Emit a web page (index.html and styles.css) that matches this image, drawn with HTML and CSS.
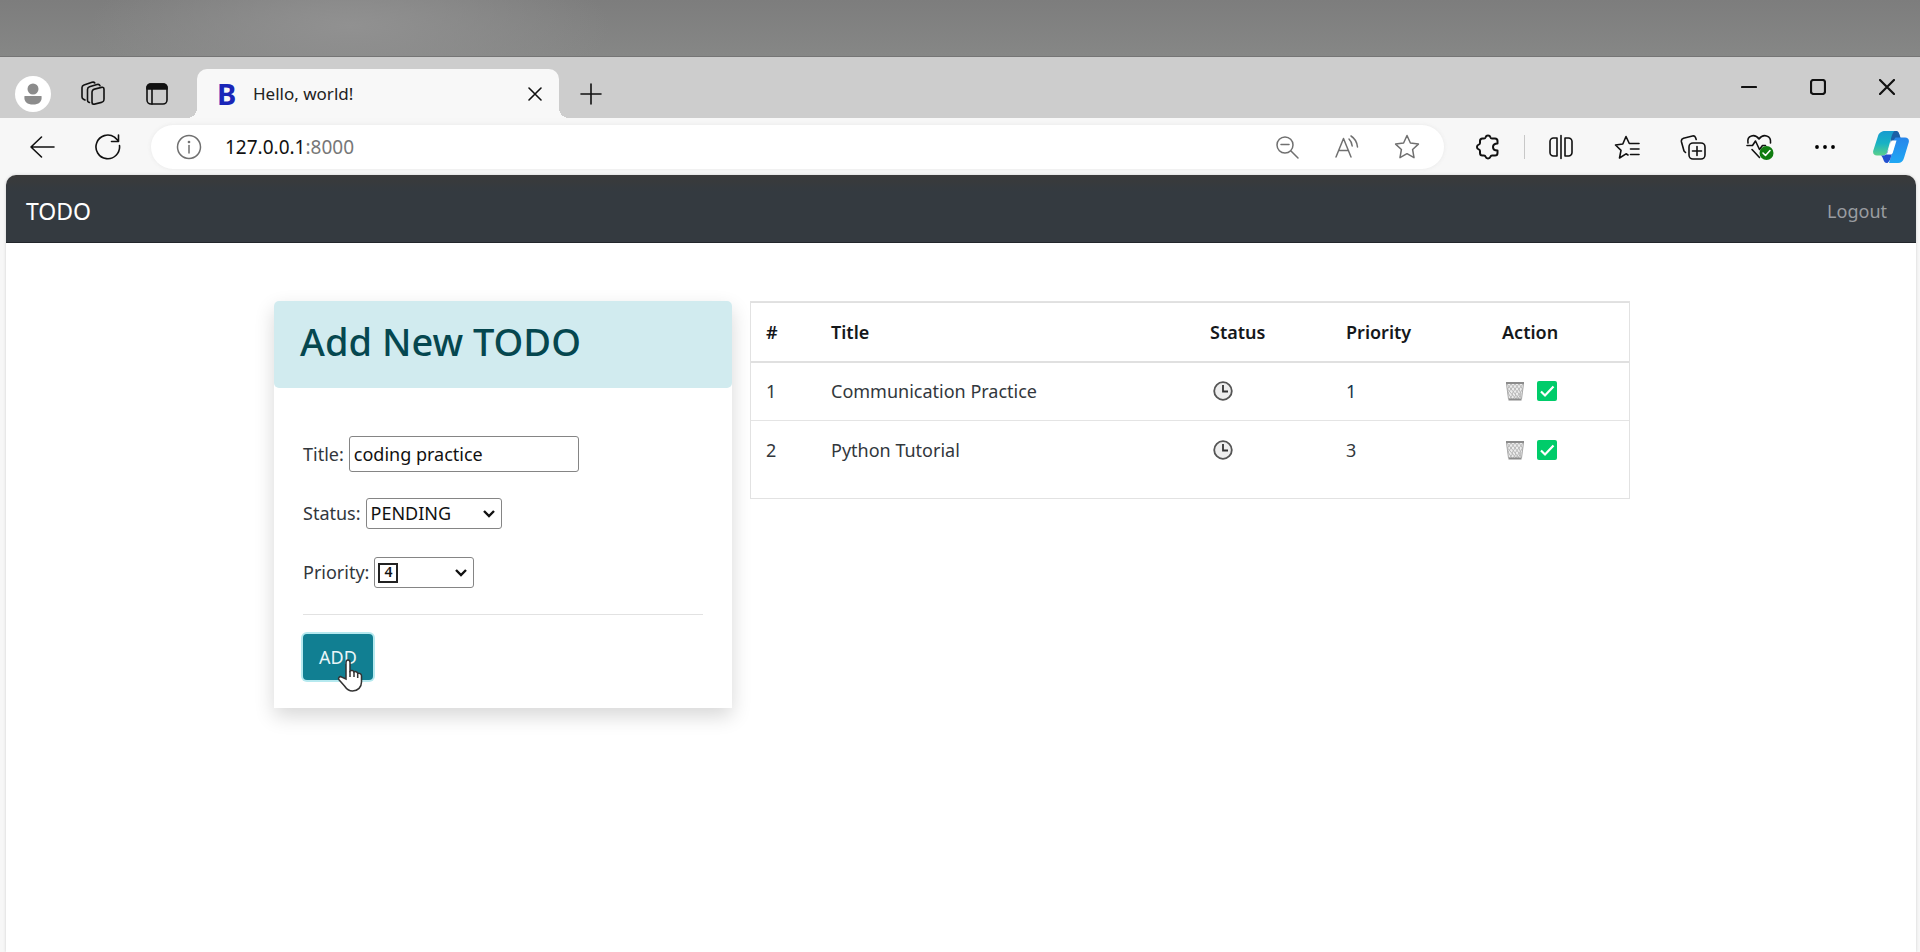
FILE: index.html
```html
<!DOCTYPE html>
<html lang="en">
<head>
<meta charset="utf-8">
<title>Hello, world!</title>
<link rel="stylesheet" href="styles.css">
</head>
<body>
<div class="desktop"></div>
<div class="browser">
  <header class="tabbar">
    <button class="avatar" aria-label="Profile"><svg width="36" height="36" viewBox="0 0 36 36"><circle cx="18" cy="18" r="18" fill="#fff"/><circle cx="18" cy="13" r="5.5" fill="#8c8c8c"/><path d="M9.500 20h17c1 6-3 8.500-8.500 8.500S8.500 26 9.500 20z" fill="#8c8c8c"/></svg></button>
    <button class="icon" aria-label="Workspaces"><svg width="28" height="28" viewBox="0 0 28 28" class="line"><rect x="13" y="9" width="12" height="15" rx="2.500" transform="skewY(-14) translate(0 4)"/><path d="M10.500 22.500l-.800-.300c-1-.400-1.200-1-1.200-2V9.500c0-1.500.6-2.200 2-2.700L18 4.500c1.600-.5 2.500 0 3 1.200M6 20l-1.500-.8c-1-.5-1.500-1-1.500-2.200V7.500C3 6 3.500 5.500 5 5l8-2.700c1.200-.4 2.200-.2 2.800.7"/></svg></button>
    <button class="icon" aria-label="Tab actions"><svg width="28" height="28" viewBox="0 0 28 28" class="line"><rect x="4" y="4" width="20" height="20" rx="4"/><path d="M4 9V7.500A3.500 3.500 0 0 1 7.500 4h13A3.500 3.500 0 0 1 24 7.500V9z" fill="#111"/><path d="M9 9v15"/></svg></button>
    <div class="tab">
      <span class="favicon">B</span><span class="tab-title">Hello, world!</span>
      <button class="icon small" aria-label="Close tab"><svg width="14" height="14" viewBox="0 0 14 14" class="line"><path d="M1 1l12 12M13 1L1 13"/></svg></button>
    </div>
    <button class="icon plus" aria-label="New tab"><svg width="22" height="22" viewBox="0 0 22 22" class="line"><path d="M11 1v20M1 11h20"/></svg></button>
    <div class="window-controls">
      <button class="icon" aria-label="Minimize"><svg width="16" height="16" viewBox="0 0 16 16" class="line bold"><path d="M1 8h14"/></svg></button>
      <button class="icon" aria-label="Maximize"><svg width="16" height="16" viewBox="0 0 16 16" class="line bold"><rect x="1" y="1" width="14" height="14" rx="2.500"/></svg></button>
      <button class="icon" aria-label="Close"><svg width="16" height="16" viewBox="0 0 16 16" class="line bold"><path d="M1 1l14 14M15 1L1 15"/></svg></button>
    </div>
  </header>
  <div class="toolbar">
    <button class="icon" aria-label="Back"><svg width="26" height="26" viewBox="0 0 26 26" class="line"><path d="M25 13H2M12.500 3L2 13l10.500 10"/></svg></button>
    <button class="icon" aria-label="Refresh"><svg width="28" height="28" viewBox="0 0 28 28" class="line"><path d="M25.500 12.500A11.800 11.800 0 1 1 20.500 4.200L24 7.500M24.500 2v6.500h-7"/></svg></button>
    <div class="address">
      <button class="icon" aria-label="Site information"><svg width="26" height="26" viewBox="0 0 26 26" class="line grey"><circle cx="13" cy="13" r="11.500"/><path d="M13 11.500V19"/><circle cx="13" cy="8" r=".6"/></svg></button>
      <span class="url">127.0.0.1<span class="port">:8000</span></span>
      <button class="icon" aria-label="Zoom out"><svg width="26" height="26" viewBox="0 0 26 26" class="line grey"><circle cx="11" cy="11" r="8"/><path d="M17 17l7 7M7 10.500h8"/></svg></button>
      <button class="icon" aria-label="Read aloud"><svg width="26" height="26" viewBox="0 0 26 26" class="line grey"><path d="M2 23L9.500 4.500 17 23M5 16.500h9.500M15 5c2 2 3 4 3.200 7M17 2c4 2.500 6 6 6.500 11"/></svg></button>
      <button class="icon" aria-label="Add to favorites"><svg width="26" height="26" viewBox="0 0 26 26" class="line grey"><path d="M13 1.500l3.400 7.500 8 1.100-5.800 5.400 1.400 8.200-7-4-7 4 1.400-8.200-5.800-5.400 8-1.100z"/></svg></button>
    </div>
    <div class="extensions">
      <button class="icon" aria-label="Extensions"><svg width="26" height="26" viewBox="0 0 26 26" class="line thick"><path d="M9 4.500c1 0 1.300-.4 1.600-1.300.7-2.300 4.100-2.300 4.800 0 .3.900.6 1.300 1.600 1.300h3c1.500 0 2.500 1 2.500 2.500v2.500c-1.500 0-4.500 0-4.500 3.500s3 3.500 4.500 3.500V19c0 1.500-1 2.500-2.500 2.500h-3c-1 0-1.300.4-1.600 1.300-.7 2.300-4.100 2.300-4.800 0-.3-.9-.6-1.300-1.600-1.300H7.500C6 21.500 5 20.500 5 19v-2c0-1-.4-1.300-1.300-1.600-2.300-.7-2.300-4.100 0-4.800C4.600 10.300 5 10 5 9V7c0-1.500 1-2.500 2.500-2.500z"/></svg></button>
      <span class="divider"></span>
      <button class="icon" aria-label="Split screen"><svg width="26" height="26" viewBox="0 0 26 26" class="line"><path d="M9 4H5.500A3.500 3.500 0 0 0 2 7.500v11A3.500 3.500 0 0 0 5.500 22H9M17 4h3.500A3.500 3.500 0 0 1 24 7.500v11a3.500 3.500 0 0 1-3.500 3.500H17M13 1.500v23M9 4v18M17 4v18"/></svg></button>
    </div>
    <button class="icon" aria-label="Favorites"><svg width="26" height="26" viewBox="0 0 26 26" class="line"><path d="M14 21l-2-1.200L5.500 24 7 16.300 1.500 11l7.300-1L12 2.500 15.300 9.500H25M16.500 15H25M16.500 20.500H25"/></svg></button>
    <button class="icon" aria-label="Collections"><svg width="26" height="26" viewBox="0 0 26 26" class="line"><rect x="9" y="9" width="16" height="16" rx="4"/><path d="M17 12.500v9M12.500 17h9M5.500 18.500L4 17 1.500 8c-.5-2 .2-3.200 2-3.800L12.500 2c1.500-.3 2.500.3 3 1.500l.7 2"/></svg></button>
    <button class="icon" aria-label="Browser essentials"><svg width="30" height="30" viewBox="0 0 30 30" class="line"><path d="M4 11C2.500 3 11 1.500 15 7c4-5.500 12.500-4 11.500 4M3 13.500h5.500l3-4.500 4 8.500 3-4h3M8 17.500l7.500 8"/><circle cx="22.500" cy="21" r="7" fill="#107c10" stroke="none"/><path d="M19 21l2.500 2.500 4.500-5" stroke="#fff"/></svg></button>
    <button class="icon" aria-label="Settings and more"><svg width="24" height="24" viewBox="0 0 24 24"><circle cx="4" cy="12" r="1.900"/><circle cx="12" cy="12" r="1.900"/><circle cx="20" cy="12" r="1.900"/></svg></button>
    <button class="icon" aria-label="Copilot"><svg width="36" height="34" viewBox="0 0 36 34"><defs><linearGradient id="teal" x1="0" y1="0" x2="0" y2="1"><stop offset="0" stop-color="#179bd0"/><stop offset=".5" stop-color="#18b2c4"/><stop offset="1" stop-color="#5bd08c"/></linearGradient><linearGradient id="blue" x1="0" y1="0" x2="0" y2="1"><stop offset="0" stop-color="#2a7de8"/><stop offset="1" stop-color="#1fa8f4"/></linearGradient></defs><path d="M19 1h4c3 0 3 4 4.500 6.500H32c3 0 4.500 2 3.700 5L31 28c-1 3.500-3 5-6 5h-9l5-16z" fill="url(#blue)"/><path d="M16 1h7c2.500 0 3 2 4.500 6.500h-5L18 14z" fill="#1b5fa6"/><path d="M12 1h9.500c-2.500 2-3 6-4.500 11l-2.500 9c-.8 2.800-2 4.500-5 4.500H4c-3 0-4.500-2-3.700-5L5 6c1-3.500 4-5 7-5z" fill="url(#teal)"/><path d="M8 25.500h2c3 0 4-2 4.800-4.500L17 18l3 0-1.500 7c-.7 3-1.500 6-4 8H14c-4 0-3-5-6-7.500z" fill="#2150d0"/><path d="M18.500 10.500h5L20 22c-.5 2-1.500 2.500-3 2.500h-4c1.300-1 1.600-2 2-3.500z" fill="#fff"/></svg></button>
  </div>
  <div class="page">
    <nav class="navbar"><a class="brand" href="#">TODO</a><a class="logout" href="#">Logout</a></nav>
    <main class="content">
      <section class="card">
        <h1 class="card-title">Add New TODO</h1>
        <form class="card-body">
          <div class="field"><label for="title">Title:</label><input class="control text" id="title" type="text" value="coding practice"></div>
          <div class="field"><label for="status">Status:</label><span class="picker"><select class="control status" id="status"><option>PENDING</option><option>COMPLETED</option></select><svg class="chevron" width="14" height="9" viewBox="0 0 14 9"><path d="M2 2l5 5 5-5"/></svg></span></div>
          <div class="field"><label for="priority">Priority:</label><span class="picker keycap"><select class="control priority" id="priority"><option>4</option><option>3</option><option>2</option><option>1</option></select><svg class="chevron" width="14" height="9" viewBox="0 0 14 9"><path d="M2 2l5 5 5-5"/></svg></span></div>
          <hr class="rule">
          <button class="add" type="button">ADD<svg class="pointer" width="26" height="33" viewBox="0 0 26 33"><path d="M9 20V3.500C9 .3 13 .3 13 3.500V12c1-1 3.500-.7 4 1 1.200-.8 3.200-.3 3.700 1.300 1.800-.5 3.800.5 3.800 2.700v6c0 5-3.500 9-9 9-4 0-6-2-8-5L1.800 20.500c-1-2 1.200-3.700 3-2.300z" fill="#fff" stroke="#333" stroke-width="1.500"/><path d="M13 12v6M17 13v5M20.700 14.500V19" stroke="#333" stroke-width="1.500" fill="none"/></svg></button>
        </form>
      </section>
      <section class="list">
        <table class="todos">
          <colgroup><col class="c-num"><col class="c-title"><col class="c-status"><col class="c-priority"><col></colgroup>
          <thead><tr><th>#</th><th>Title</th><th>Status</th><th>Priority</th><th>Action</th></tr></thead>
          <tbody>
            <tr><td>1</td><td>Communication Practice</td><td><svg class="glyph" width="20" height="20" viewBox="0 0 20 20"><use href="#clock"/></svg></td><td class="strong">1</td><td><span class="actions"><a href="#" aria-label="Delete"><svg class="glyph" width="20" height="20" viewBox="0 0 20 20"><use href="#bin"/></svg></a><a href="#" aria-label="Complete"><svg class="glyph" width="20" height="20" viewBox="0 0 20 20"><use href="#tick"/></svg></a></span></td></tr>
            <tr><td>2</td><td>Python Tutorial</td><td><svg class="glyph" width="20" height="20" viewBox="0 0 20 20"><use href="#clock"/></svg></td><td>3</td><td><span class="actions"><a href="#" aria-label="Delete"><svg class="glyph" width="20" height="20" viewBox="0 0 20 20"><use href="#bin"/></svg></a><a href="#" aria-label="Complete"><svg class="glyph" width="20" height="20" viewBox="0 0 20 20"><use href="#tick"/></svg></a></span></td></tr>
          </tbody>
        </table>
      </section>
    </main>
  </div>
</div>
<svg class="symbols" width="0" height="0">
  <symbol id="clock" viewBox="0 0 20 20"><circle cx="10" cy="10" r="8.800" fill="#eee" stroke="#555" stroke-width="1.800"/><path d="M10 4v6.500h5" fill="none" stroke="#333" stroke-width="1.800"/></symbol>
  <symbol id="bin" viewBox="0 0 20 20"><path d="M1 1.500h18L16.500 19h-13z" fill="#ececec"/><path d="M2 3l4 5-3 4 4 6M6 3l-3.500 5 5 6-3 4M6 3l4 5-3 5 4 5M10 3L6 8l5 6-3 4M10 3l4 5-4 5 4 5M14 3l-4 5 4 5-3 5M18 3l-4 5 2 5-3 5M14 3l3.500 5-3 5 1.500 4" stroke="#b8b8b8" stroke-width="1" fill="none"/><path d="M1 2h18M3.500 18.500h13" stroke="#8c8c8c" stroke-width="2.200"/><path d="M1.500 3l2 15M18.500 3l-2 15" stroke="#aaa" stroke-width="1"/></symbol>
  <symbol id="tick" viewBox="0 0 20 20"><rect width="20" height="20" rx="2" fill="#00cc6a"/><path d="M4 10.500l4 4 8.500-9" fill="none" stroke="#fff" stroke-width="2.200"/></symbol>
</svg>
</body>
</html>
```
FILE: styles.css
```css
*, *::before, *::after { box-sizing: border-box; }
body {
  margin: 0;
  min-height: 100vh;
  display: flex;
  flex-direction: column;
  background: #f7f7f7;
  font: 18px/28px "Noto Sans", "Open Sans", sans-serif;
  color: #32373c;
}
button { border: 0; padding: 0; background: none; font: inherit; color: inherit; }
a { color: inherit; text-decoration: none; }
.desktop {
  height: 57px;
  border-bottom: 1px solid #757575;
  background: radial-gradient(ellipse 260px 80px at 350px 26px, #919191, transparent), linear-gradient(#7d7d7d, #868786);
}
.browser { flex: 1; display: flex; flex-direction: column; }

.tabbar { display: flex; align-items: center; height: 61px; padding: 12px 13px 0 15px; background: #cdcdcd; }
.icon { display: flex; align-items: center; justify-content: center; flex: none; width: 40px; height: 40px; }
.line { fill: none; stroke: #111; stroke-width: 1.6; stroke-linecap: round; stroke-linejoin: round; }
.bold { stroke-width: 2.2; }
.thick { stroke-width: 2; }
.grey { stroke: #707070; stroke-width: 1.5; }
.avatar { display: flex; flex: none; margin-right: 22px; }
.tabbar > .icon + .icon { margin-left: 24px; }
.tab {
  position: relative;
  display: flex;
  align-items: center;
  align-self: stretch;
  width: 362px;
  margin-left: 20px;
  padding: 0 4px 0 20px;
  border-radius: 10px 10px 0 0;
  background: #f8f8f8;
}
.tab::before, .tab::after { content: ""; position: absolute; bottom: 0; width: 10px; height: 10px; }
.tab::before { right: 100%; background: radial-gradient(circle at 0 0, transparent 10px, #f8f8f8 10px); }
.tab::after { left: 100%; background: radial-gradient(circle at 100% 0, transparent 10px, #f8f8f8 10px); }
.favicon { width: 36px; font: 700 29px/28px "Noto Sans", sans-serif; color: #1a26b8; }
.tab-title { flex: 1; font-size: 17px; color: #222; }
.plus { margin-left: 12px; }
.window-controls { display: flex; gap: 29px; margin-left: auto; padding-bottom: 14px; }

.toolbar { display: flex; align-items: center; gap: 26px; height: 57px; padding: 0 9px 0 22px; }
.address {
  flex: 1;
  display: flex;
  align-items: center;
  gap: 20px;
  height: 44px;
  margin: 0 -2px 0 -3px;
  padding: 0 17px 0 18px;
  border-radius: 22px;
  background: #fff;
  box-shadow: 0 0 4px #e8e8e8;
}
.url { flex: 1; margin-left: -4px; font-size: 19px; color: #111; }
.port { color: #777; }
.extensions { display: flex; align-items: center; gap: 16px; }
.divider { width: 1px; height: 24px; background: #c8c8c8; }

.page {
  flex: 1;
  margin: 0 4px 0 6px;
  border-radius: 10px 10px 0 0;
  background: #fff;
  box-shadow: 0 0 3px #ccc;
}
.navbar {
  display: flex;
  align-items: center;
  justify-content: space-between;
  height: 68px;
  padding: 4px 29px 0 20px;
  border-radius: 10px 10px 0 0;
  border-bottom: 1px solid #22262b;
  background: linear-gradient(#3a3a3a, #343a40 16px);
}
.brand { font-size: 23px; color: #fff; }
.logout { color: #9a9da0; }
.content {
  display: grid;
  grid-template-columns: 458px 1fr;
  align-items: start;
  gap: 18px;
  max-width: 1374px;
  margin: 0 auto;
  padding: 58px 18px 0 0;
}
.card { border-radius: 5px 5px 0 0; background: #fff; box-shadow: 0 8px 20px rgba(0, 0, 0, .16); }
.card-title {
  margin: 0;
  height: 87px;
  padding: 14px 26px;
  border-radius: 5px;
  background: #d1ebef;
  font-size: 38px;
  line-height: 52px;
  font-weight: 500;
  color: #05474f;
}
.card-body { padding: 48px 29px 28px; }
.field { display: flex; align-items: center; gap: 5px; height: 36px; margin-bottom: 23px; }
.control { border: 1px solid #858585; border-radius: 3px; background: #fff; font: inherit; color: #111; }
.text { width: 230px; height: 36px; padding: 0 4px; }
.picker { position: relative; display: flex; }
.control.status, .control.priority { appearance: none; height: 31px; padding: 0 4px; }
.control.status { width: 136px; }
.control.priority { width: 100px; padding-left: 9px; font-size: 14px; font-weight: 600; }
.keycap::before { content: ""; position: absolute; left: 4px; top: 6px; width: 20px; height: 20px; border: 2px solid #222; }
.chevron { position: absolute; right: 6px; top: 11px; fill: none; stroke: #111; stroke-width: 2.4; }
.rule { height: 1px; margin: 24px 0 19px; border: 0; background: #e2e2e2; }
.add {
  position: relative;
  display: block;
  width: 70px;
  height: 46px;
  border-radius: 4px;
  background: #117f92;
  box-shadow: 0 0 0 2px #b5e9ef;
  color: #e9f6f8;
}
.pointer { position: absolute; left: 34px; top: 25px; }

.list { padding-bottom: 18px; border: 1px solid #e2e2e2; }
.todos { width: 100%; table-layout: fixed; border-collapse: collapse; }
.c-num { width: 65px; }
.c-title { width: 379px; }
.c-status { width: 136px; }
.c-priority { width: 156px; }
.todos th { height: 59px; padding: 0 15px; border-top: 1px solid #e0e0e0; border-bottom: 2px solid #e0e0e0; text-align: left; font-weight: 600; color: #15181b; }
.todos td { height: 59px; padding: 0 15px; border-bottom: 1px solid #e4e4e4; }
.todos tr:last-child td { border-bottom: 0; }
.todos .strong { color: #16324a; }
.glyph { display: block; margin-left: 3px; }
.actions { display: flex; gap: 9px; }
.symbols { position: absolute; }
```
